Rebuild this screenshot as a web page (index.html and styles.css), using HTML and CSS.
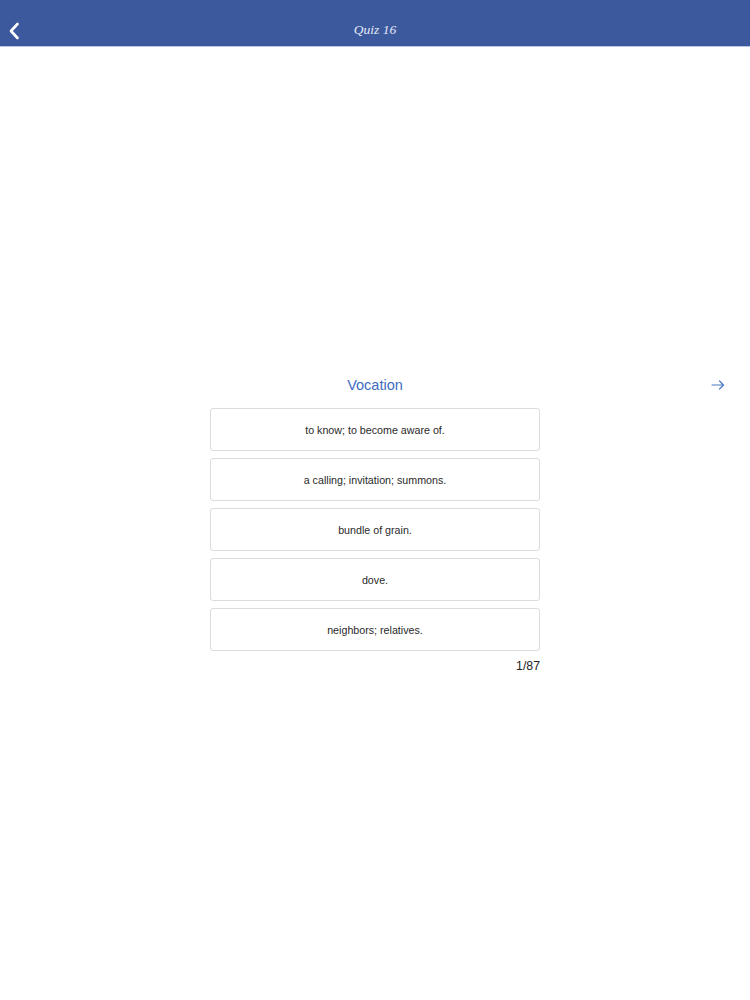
FILE: index.html
```html
<!DOCTYPE html>
<html>
<head>
<meta charset="utf-8">
<link rel="stylesheet" href="styles.css">
</head>
<body>
<header class="topbar">
  <a class="back" href="#">
    <svg width="12" height="18" viewBox="0 0 12 18"><path d="M9.5 2 L3 9 L9.5 16" fill="none" stroke="#fff" stroke-width="2.6" stroke-linecap="round" stroke-linejoin="round"/></svg>
  </a>
  <h1 class="title">Quiz 16</h1>
</header>
<main class="quiz">
  <div class="word-row">
    <div class="word">Vocation</div>
    <span class="next">
      <svg width="14" height="10" viewBox="0 0 14 10"><path d="M1 5 H12.5 M8.5 1 L12.5 5 L8.5 9" fill="none" stroke="#4a79c9" stroke-width="1.2" stroke-linecap="round" stroke-linejoin="round"/></svg>
    </span>
  </div>
  <div class="options">
    <div class="option">to know; to become aware of.</div>
    <div class="option">a calling; invitation; summons.</div>
    <div class="option">bundle of grain.</div>
    <div class="option">dove.</div>
    <div class="option">neighbors; relatives.</div>
    <div class="counter">1/87</div>
  </div>
</main>
</body>
</html>
```

FILE: styles.css
```css
html, body {
  margin: 0;
  padding: 0;
  background: #ffffff;
  font-family: "Liberation Sans", Arial, sans-serif;
}
.topbar {
  position: relative;
  height: 46px;
  background: #3d599e;
  border-bottom: 1px solid #b9c4e6;
  display: flex;
  align-items: center;
  justify-content: center;
}
.back {
  position: absolute;
  left: 8px;
  top: 22px;
  display: block;
  line-height: 0;
}
.title {
  margin: 0;
  padding-top: 14px;
  font-family: "Liberation Serif", "Times New Roman", serif;
  font-style: italic;
  font-weight: normal;
  font-size: 13.5px;
  color: #e4e9f6;
}
.quiz {
  padding-top: 328px;
}
.word-row {
  position: relative;
  height: 20px;
  display: flex;
  justify-content: center;
  align-items: center;
}
.word {
  font-size: 14.5px;
  color: #3b6cc0;
}
.next {
  position: absolute;
  right: 25px;
  top: 5px;
  line-height: 0;
}
.options {
  width: 330px;
  margin: 13px auto 0;
  display: flex;
  flex-direction: column;
  gap: 7px;
}
.option {
  box-sizing: border-box;
  height: 43px;
  border: 1px solid #dcdcdf;
  border-radius: 3px;
  display: flex;
  align-items: center;
  justify-content: center;
  font-size: 10.7px;
  color: #2a2a2a;
}
.counter {
  text-align: right;
  font-size: 12.3px;
  color: #222;
  margin-top: 1px;
}
```
